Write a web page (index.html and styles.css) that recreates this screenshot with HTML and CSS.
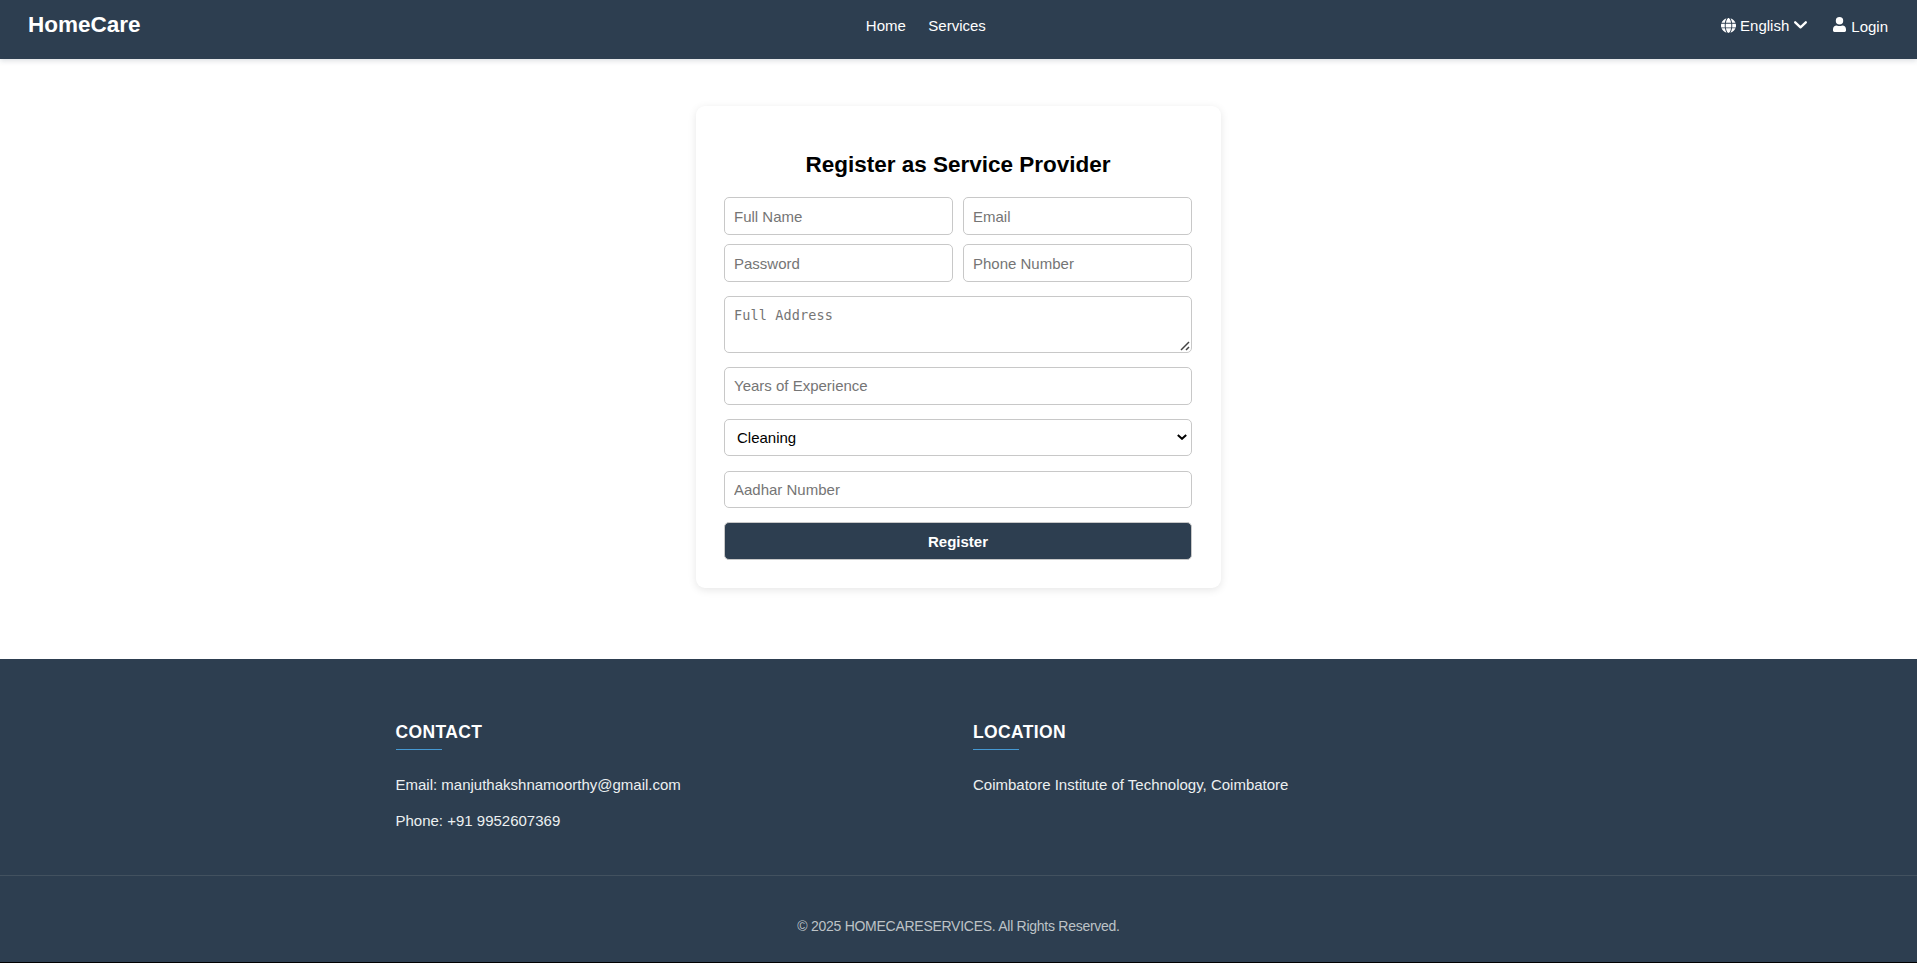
FILE: index.html
```html
<!DOCTYPE html>
<html lang="en">
<head>
<meta charset="utf-8">
<title>HomeCare</title>
<link rel="stylesheet" href="styles.css">
</head>
<body>
<header class="navbar">
  <div class="logo">HomeCare</div>
  <nav class="links"><a>Home</a><a>Services</a></nav>
  <div class="account">
    <span class="language">
      <svg class="globe" viewBox="0 0 512 512"><path fill="currentColor" d="M352 256c0 22.200-1.200 43.600-3.300 64H163.300c-2.200-20.400-3.300-41.800-3.300-64s1.200-43.600 3.300-64h185.400c2.200 20.400 3.300 41.800 3.300 64zm28.800-64h123.100c5.300 20.500 8.100 41.900 8.100 64s-2.800 43.500-8.100 64H380.800c2.100-20.600 3.200-42 3.200-64s-1.100-43.400-3.200-64zm112.600-32H376.700c-10-63.900-29.800-117.400-55.300-151.600C399.700 29.100 463.400 85.800 493.400 160zm-149.100 0H167.700c6.100-36.400 15.500-68.600 27-94.700 10.500-23.600 22.200-40.700 33.500-51.500C239.400 3.200 248.700 0 256 0s16.600 3.200 27.800 13.800c11.300 10.800 23 27.900 33.500 51.500 11.600 26 20.900 58.200 27 94.700zm-209 0H18.600C48.600 85.800 112.300 29.100 190.600 8.400 165.100 42.600 145.300 96.100 135.300 160zM8.100 192h123.100c-2.100 20.600-3.200 42-3.200 64s1.100 43.400 3.200 64H8.100C2.800 299.500 0 278.100 0 256s2.800-43.500 8.100-64zm186.600 254.600c-11.600-26-20.900-58.200-27-94.600h176.600c-6.100 36.400-15.500 68.600-27 94.600-10.500 23.600-22.200 40.700-33.500 51.500C272.600 508.800 263.300 512 256 512s-16.600-3.200-27.800-13.800c-11.300-10.800-23-27.900-33.500-51.600zM135.300 352c10 63.900 29.800 117.400 55.300 151.600C112.300 482.900 48.600 426.200 18.600 352h116.700zm358.100 0c-30 74.200-93.700 130.900-172 151.600 25.500-34.200 45.200-87.700 55.300-151.600h116.700z"/></svg>
      <span>English</span>
      <svg class="chevron" viewBox="0 0 13 8"><path d="M1.200 1.300 6.500 6.400 11.800 1.300" fill="none" stroke="currentColor" stroke-width="2.300" stroke-linecap="round" stroke-linejoin="round"/></svg>
    </span>
    <span class="login">
      <svg class="user" viewBox="0 0 448 512" preserveAspectRatio="none"><path fill="currentColor" d="M224 256a128 128 0 1 0 0-256 128 128 0 1 0 0 256zM130 288C50 288 0 345 0 420v44c0 27 21 48 48 48h352c27 0 48-21 48-48v-44c0-75-50-132-130-132-30 14-60 22-94 22s-64-8-94-22z"/></svg>
      <span>Login</span>
    </span>
  </div>
</header>
<main class="page">
  <form class="card">
    <h2 class="title">Register as Service Provider</h2>
    <div class="grid">
      <input class="field" type="text" placeholder="Full Name">
      <input class="field" type="email" placeholder="Email">
      <input class="field" type="password" placeholder="Password">
      <input class="field" type="text" placeholder="Phone Number">
    </div>
    <div class="control">
      <textarea class="field address" placeholder="Full Address"></textarea>
      <svg class="grip" viewBox="0 0 10 10"><path d="M1 9 9 1M6 9 9 6" fill="none" stroke="#444" stroke-width="1.500"/></svg>
    </div>
    <input class="field years" type="text" placeholder="Years of Experience">
    <div class="control">
      <select class="field service"><option>Cleaning</option></select>
      <svg class="arrow" viewBox="0 0 10 6"><path d="M.8 1 5 4.800 9.200 1" fill="none" stroke="#000" stroke-width="2"/></svg>
    </div>
    <input class="field aadhar" type="text" placeholder="Aadhar Number">
    <button class="field submit" type="button">Register</button>
  </form>
</main>
<footer class="footer">
  <div class="columns">
    <section>
      <h3 class="heading">CONTACT</h3>
      <p class="line">Email: manjuthakshnamoorthy@gmail.com</p>
      <p class="line">Phone: +91 9952607369</p>
    </section>
    <section>
      <h3 class="heading">LOCATION</h3>
      <p class="line">Coimbatore Institute of Technology, Coimbatore</p>
    </section>
  </div>
  <div class="copyright">© 2025 HOMECARESERVICES. All Rights Reserved.</div>
</footer>
</body>
</html>
```
FILE: styles.css
```css
* { box-sizing: border-box; }
body {
  margin: 0;
  height: 963px;
  display: flex;
  flex-direction: column;
  overflow: hidden;
  background: #fff;
  font: 15px/17px "Liberation Sans", Arial, sans-serif;
}
.navbar {
  display: flex;
  justify-content: space-between;
  align-items: flex-start;
  flex: none;
  height: 59px;
  padding: 0 29px 0 28px;
  background: #2d3e50;
  color: #fff;
  box-shadow: 0 2px 5px rgba(45, 62, 80, .16);
}
.logo { padding-top: 12px; font-size: 22.5px; line-height: 26px; font-weight: bold; }
.links { display: flex; gap: 22.5px; margin-right: 10px; padding-top: 17px; }
.account { display: flex; justify-content: flex-end; gap: 26px; padding-top: 17px; }
.language, .login { display: flex; align-items: flex-start; }
.globe { width: 15px; height: 15px; margin: 1px 4px 0 0; }
.chevron { width: 13px; height: 8px; margin: 4px 0 0 5px; }
.user { width: 13px; height: 15px; margin-right: 5px; }
.login span { padding-top: 1px; }
.page { flex: none; height: 600px; padding-top: 47px; }
.card {
  display: flex;
  flex-direction: column;
  width: 525px;
  height: 482px;
  margin: 0 auto;
  padding: 46px 29px 28px 28px;
  border-radius: 9px;
  background: #fff;
  box-shadow: 0 2px 9px rgba(0, 0, 0, .1);
}
.title { margin: 0 0 19px; font-size: 22.5px; line-height: 26px; text-align: center; }
.grid { display: grid; grid-template-columns: 1fr 1fr; gap: 9px 10px; margin-bottom: 14px; }
.field {
  width: 100%;
  height: 38px;
  flex: none;
  margin: 0 0 14px;
  padding: 9px;
  border: 1px solid #c8c8c8;
  border-radius: 5px;
  background: #fff;
  color: #000;
  font: 15px/17px "Liberation Sans", Arial, sans-serif;
}
.control { display: flex; position: relative; }
.grid .field { margin: 0; }
.field::placeholder { color: #757575; }
.field.address { height: 57px; padding-top: 10px; font: 13.5px/17px "DejaVu Sans Mono", monospace; letter-spacing: .12px; resize: none; }
.grip { position: absolute; right: 2px; top: 45px; width: 10px; height: 10px; }
.field.years { padding-bottom: 11px; }
.field.service { height: 37px; margin-bottom: 15px; padding: 0 12px; appearance: none; }
.arrow { position: absolute; right: 5px; top: 15px; width: 10px; height: 6px; }
.field.aadhar { height: 37px; }
.field.submit { margin: 0; background: #2d3e50; color: #fff; font-weight: bold; }
.footer { flex: none; height: 304px; background: #2d3e50; color: #ecf0f1; border-bottom: 1px solid #000; }
.columns {
  display: grid;
  grid-template-columns: 1fr 1fr;
  gap: 29px;
  width: 1126px;
  height: 216px;
  margin: 0 auto;
  padding: 63px 0 0;
}
.heading {
  margin: 0 0 26px;
  padding-bottom: 8px;
  background: linear-gradient(#4599d3, #4599d3) left bottom / 46px 1px no-repeat;
  color: #fff;
  font-size: 17.5px;
  line-height: 20px;
  letter-spacing: .35px;
}
.line { margin: 0 0 19px; }
.copyright {
  padding-top: 42px;
  border-top: 1px solid #42515f;
  color: #bdc3c7;
  font-size: 14px;
  line-height: 17px;
  letter-spacing: -.27px;
  text-align: center;
}
```
